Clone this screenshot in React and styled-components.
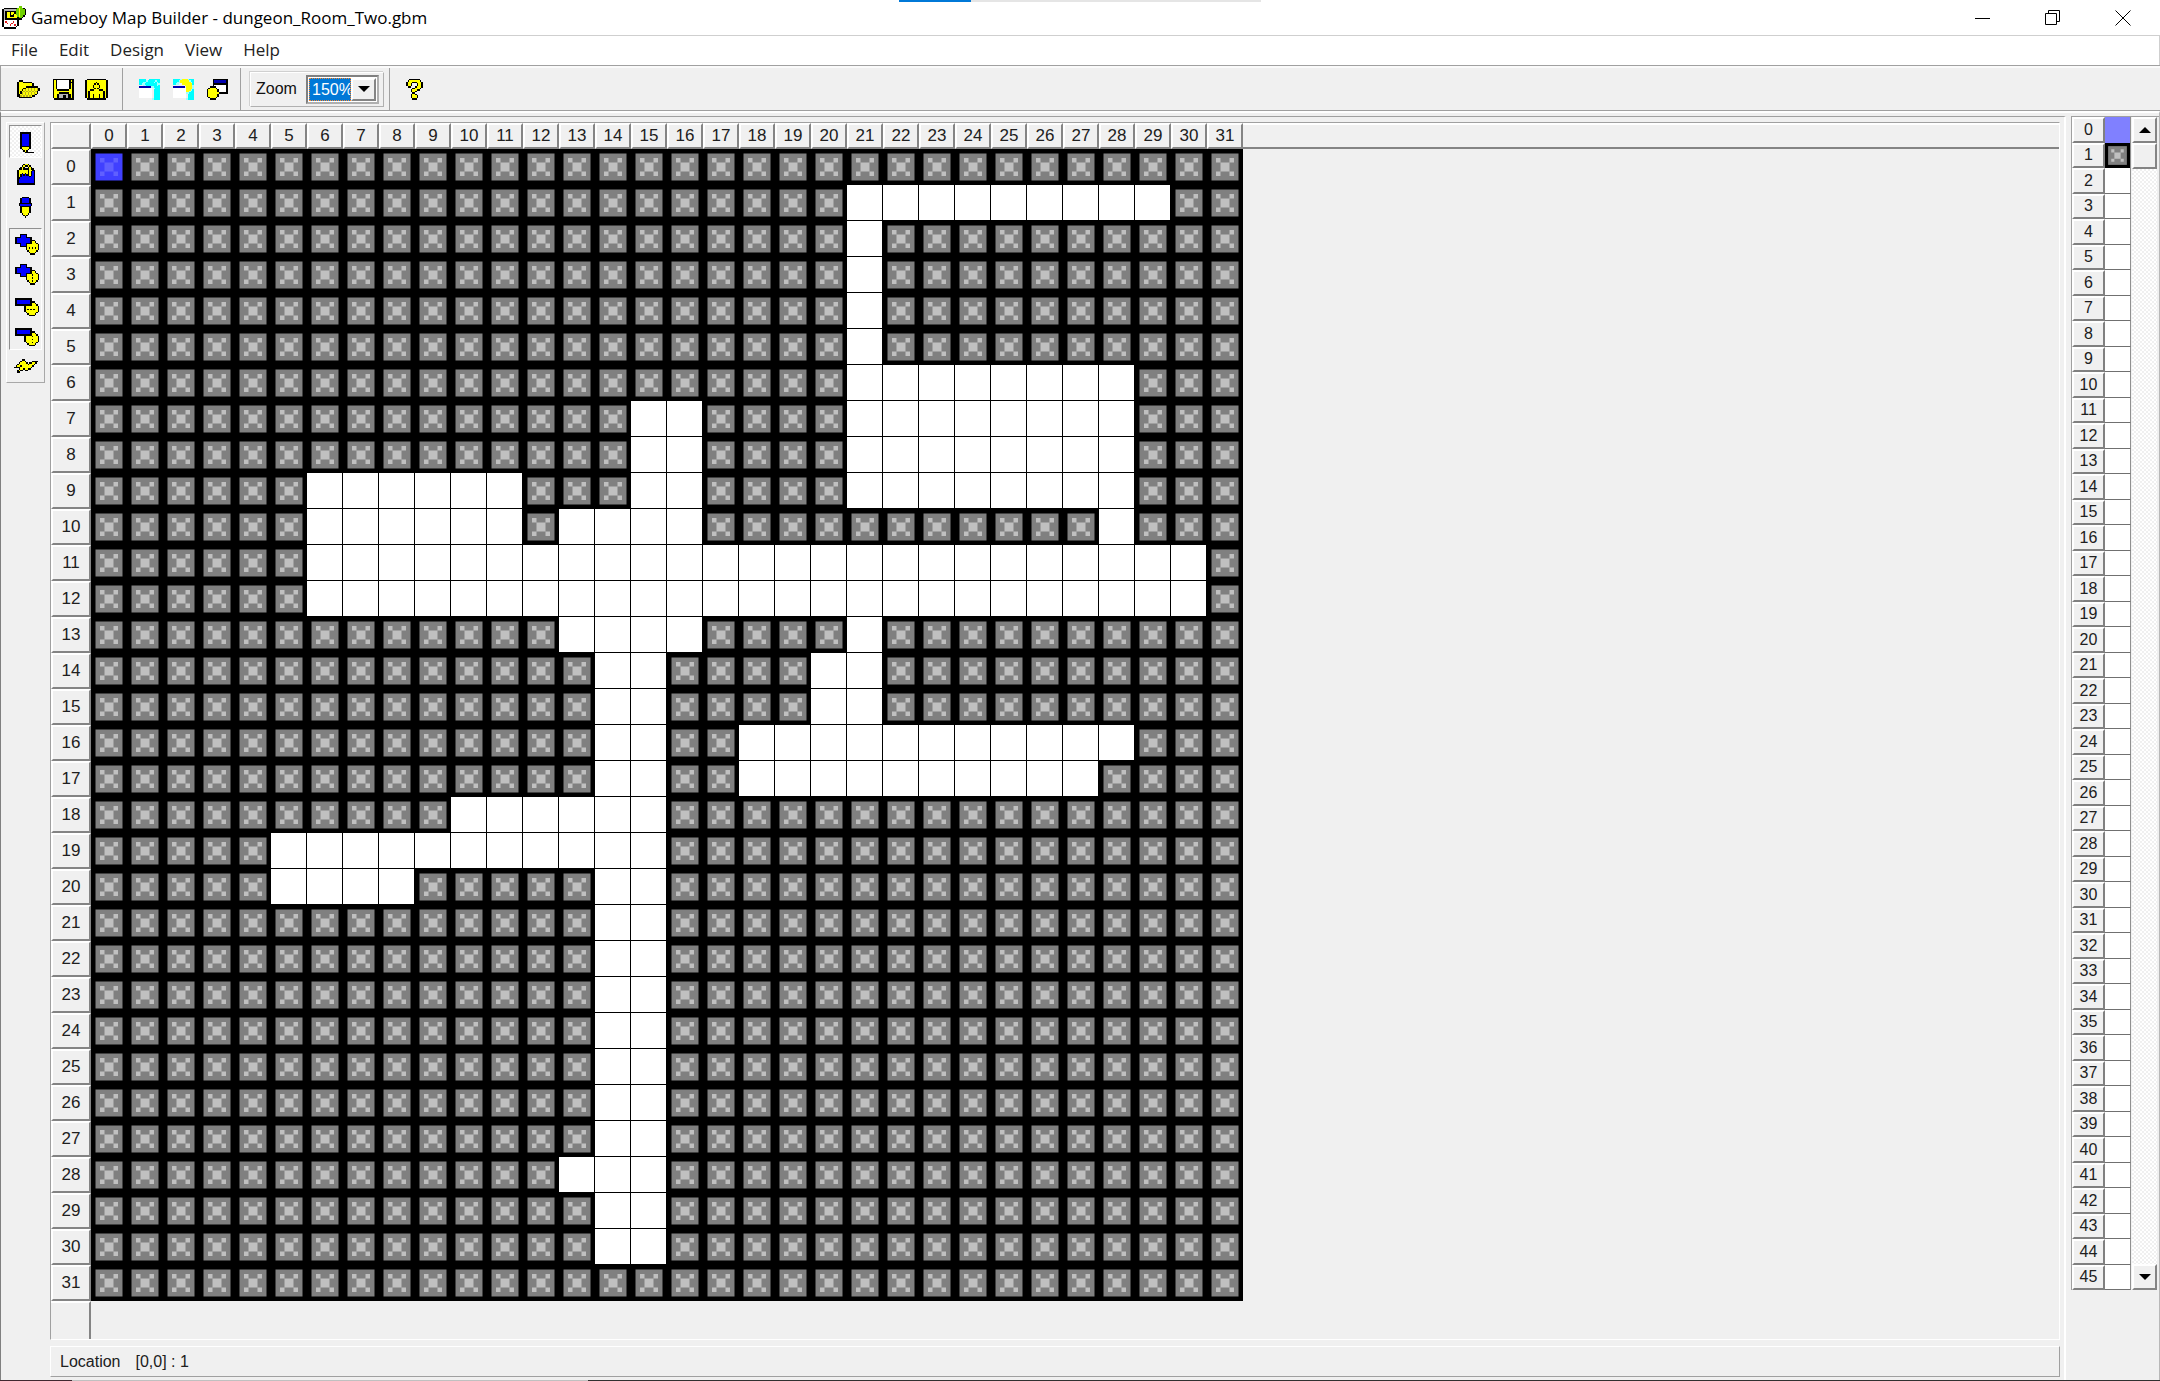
import React, { useState } from 'react';
import styled, { createGlobalStyle, css } from 'styled-components';

const GlobalStyle = createGlobalStyle`
  * { box-sizing: border-box; }
  body { margin: 0; background: #f0f0f0; color: #111; font: 16px "Liberation Sans", Arial, sans-serif; }
  button { font: inherit; color: inherit; margin: 0; padding: 0; border: 0; background: none; }
`;

const COLORS = {
  K: '#000000', Y: '#ffff00', D: '#b8b020', W: '#ffffff', G: '#b4b4b4',
  B: '#0000ff', N: '#0000b0', C: '#00ffff', L: '#a0ffff', R: '#e02020', E: '#70d000',
};

const ART = {
  app: [
    '...........EE...',
    '.KKKKKKKKKEYEEK.',
    'KGGGGGGGGEEYEEEK',
    'KGKKKKKKKEEYEEEK',
    'KGKYYKYYKEEYEEEK',
    'KGKYYKYKYEEYEEEK',
    'KGKYYKKKYYEYEEK.',
    'KGKYYYYYYYKEEK..',
    'KGKKKKKKKKKKK...',
    'KWWWWWWWWWK.....',
    'KWRWWWWRWWK.....',
    'KWWRWWRWWWK.....',
    'KWWWWRWWRWK.....',
    'KWWWWWWWWK......',
    '.KKKKKKKK.......',
  ],
  open: [
    '.KKK...........',
    'KYYYKKKKKK.....',
    'KYYYYYYYYYK....',
    'KYYYYYYYYYK....',
    'KYYYYYKKKKKKKK.',
    'KYYYKKYDYDYDYDK',
    'KYYKYDYDYDYDYDK',
    'KYKYDYDYDYDYDK.',
    'KYKDYDYDYDYDYK.',
    'KKYDYDYDYDYDK..',
    'KKDYDYDYDYKK...',
    '.KKKKKKKKK.....',
  ],
  save: [
    'KKKKKKKKKKKKKK',
    'KYKWWWWWWWWKYK',
    'KYKWWWWWWWWKKK',
    'KYKWWWWWWWWKYK',
    'KYKWWWWWWWWKYK',
    'KYKWWWWWWWWKYK',
    'KYKWWWWWWWWKYK',
    'KYYKKKKKKKKYYK',
    'KYYYYYYYYYYYYK',
    'KYYYKKKKKKKYYK',
    'KYYKGGGGGGKKYK',
    'KYYKGGGKKGKKYK',
    'KYYKGGGKKGKKYK',
    '.KKKKKKKKKKKKK',
  ],
  exportMap: [
    '.KKKKKKKKKKKKK.',
    'KYYYYYYYYYYYYYK',
    'KYYYYYYKYYYYYYK',
    'KYYYYYKYKYYYYYK',
    'KYYYYKYYYKYYYYK',
    'KYYYYKYYYKYYYYK',
    'KYYYYYKYKYYYYYK',
    'KYYKKKYYYKKKYYK',
    'KYKYYYYYYYYYKYK',
    'KYKYYYYYYYYYKYK',
    'KYKYYKYYYKYYKYK',
    'KYKYYKYYYKYYKYK',
    'KYKYYKYYYKYYKYK',
    '.KKKKKKKKKKKKK.',
  ],
  mapProps: [
    'CCCCC..CCCCCCC',
    'CCCCCLCCCCCLCC',
    'CCCLLCCCCCLCLC',
    'CCLLCCCCCCCCLL',
    '...LLCCCCCCCLC',
    'NNNNNNNNLLCCCC',
    'WWWWWWWWW.LCCC',
    'WWWWWWWWW.CCCC',
    'WWWWWWWWW.CCCC',
    'WWWWWWWWW.CCCC',
    'WWWWWWWWW.CCCC',
    'WWWWWWWWW.CCCC',
    'WWWWWWWWW.CCCC',
    '.........LCCCC',
  ],
  tileProps: [
    'CCCCCLYYYYLCCC',
    'CCCCLYYYYYYLCC',
    'CCCLLYYYYYYYLC',
    'CCLL..YYYYYYYC',
    '........YYYYYL',
    'NNNNNNNN.YYYYL',
    'WWWWWWWWWYYYYL',
    'WWWWWWWWWYYYLC',
    'WWWWWWWWWYYLCC',
    'WWWWWWWWWLLCCC',
    'WWWWWWWWW.CCCC',
    'WWWWWWWWW.CCCC',
    'WWWWWWWWW.CCCC',
    '.........LCCCC',
  ],
  defaults: [
    '....KKKKKKKKKK',
    '....KNNNNNNNNK',
    '....KNNNNNNNNK',
    '....KKKKKKKKKK',
    '....KWWWWWWWWK',
    '..KKKKWWWWWWWK',
    '.KYYYYKWWWWWWK',
    'KYYYYYYKWWWWWK',
    'KYYYYYYKWWWWWK',
    'KYYYYYYYKKKKKK',
    'KYYYYYYK......',
    'KYYYYYYK......',
    '.KYYYYK.......',
    '..KKKK........',
  ],
  help: [
    '..KKKKKKK..',
    '.KYYYYYYYK.',
    'KYYYKKKYYYK',
    'KYYK...KYYK',
    'KYYK...KYYK',
    '.KK...KYYYK',
    '....KKYYYK.',
    '...KYYYKK..',
    '...KYYK....',
    '....KK.....',
    '...KYYK....',
    '...KYYYK...',
    '...KYYYK...',
    '....KKK....',
  ],
  pencil: [
    '..........',
    '..........',
    '.KKKKKKK..',
    '.KBBBBBK..',
    '.KBBBBBK..',
    '.KBBBBBK..',
    '.KBBBBBK..',
    '.KBBBBBK..',
    '.KBBBBBK..',
    '.KBBBBBK..',
    '.KBBBBBK..',
    '.KKKKKKK..',
    '.KYYYYYK..',
    '..KYYYK...',
    '...KYK....',
    '....KKKKKK',
  ],
  fill: [
    '....KYYK....',
    '...KYKKYK...',
    '..KYK..KYK..',
    '.KKYKKKKYKK.',
    'KYYYYYYKYYKK',
    'KYYYYYYKYKBK',
    'KYYKYKYKYKBK',
    'KYKBKBKKYKBK',
    'KYKBBBBBKBBK',
    'KKBBBBBBBBBK',
    'KBBBBBBBBBBK',
    'KBBBBBBBBBBK',
    'KBBBBBBBBBBK',
    'KKKKKKKKKKKK',
  ],
  dropper: [
    '..KKKKK..',
    '.KBBBBBK.',
    '.KBBBBBK.',
    '.KBBBBBK.',
    'KKKKKKKKK',
    'KBBBBBBBK',
    '.KKKKKKK.',
    '.KYYYYYK.',
    '.KYYYYYK.',
    '.KYYYYYK.',
    '.KYYYYYK.',
    '..KYYYK..',
    '...KYK...',
    '....K....',
  ],
  addRow: [
    '...KKKKK........',
    '...KBBBK........',
    'KKKKBBBKKKK.....',
    'KBBBBBBBBBK.....',
    'KBBBBBBBBBKKK...',
    'KBBBBBBBBBKYYK..',
    'KKKKBBBKKKKYYYK.',
    '...KBBBKYYYYYYYK',
    '...KKKKKYYYYYYYK',
    '.......KYKYKYKYK',
    '.......KYYYYYYYK',
    '........KYYYYYK.',
    '.........KYYYK..',
    '..........KKK...',
  ],
  addCol: [
    '...KKKKK........',
    '...KBBBK........',
    'KKKKBBBKKKK.....',
    'KBBBBBBBBBK.....',
    'KBBBBBBBBBKKK...',
    'KBBBBBBBBBKYYK..',
    'KKKKBBBKKKKYYYK.',
    '...KBBBKYYYKYYYK',
    '...KKKKKYYYYYYYK',
    '.......KYYYKYYYK',
    '.......KYYYYYYYK',
    '........KYYKYYK.',
    '.........KYYYK..',
    '..........KKK...',
  ],
  delRow: [
    '................',
    '................',
    '................',
    '................',
    'KKKKKKKKKKK.....',
    'KBBBBBBBBBK.....',
    'KBBBBBBBBBKKK...',
    'KBBBBBBBBBKYYK..',
    'KKKKKKKKKKKYYYK.',
    '......KYYYYYYYYK',
    '......KYYYYYYYYK',
    '......KYKYKYKYYK',
    '......KYYYYYYYYK',
    '.......KYYYYYYK.',
    '........KYYYYK..',
    '.........KKKK...',
  ],
  delCol: [
    '................',
    '................',
    '................',
    '................',
    'KKKKKKKKKKK.....',
    'KBBBBBBBBBK.....',
    'KBBBBBBBBBKKK...',
    'KBBBBBBBBBKYYK..',
    'KKKKKKKKKKKYYYK.',
    '......KYYYYKYYYK',
    '......KYYYYYYYYK',
    '......KYYYYKYYYK',
    '......KYYYYYYYYK',
    '.......KYYYKYYK.',
    '........KYYYYK..',
    '.........KKKK...',
  ],
  flash: [
    '................',
    '................',
    '.....KK.........',
    '....KYYK....KKKK',
    '...KYYYYK.KKYYK.',
    '..KYYYYYYKYYYK..',
    '.KYYKYYYYYYYK...',
    'KKKKYYYYYYYK....',
    '...KYYKYYKK.....',
    '..KYKK.KK.......',
    '..KK............',
  ],
};

const IconSvg = styled.svg`
  display: block;
  width: 24px;
  height: 24px;
  flex: none;
`;

function PixelIcon({ name }) {
  const rows = ART[name];
  const dx = Math.floor((16 - rows[0].length) / 2);
  const dy = Math.floor((16 - rows.length) / 2);
  const rects = [];
  rows.forEach((row, y) => {
    let x = 0;
    while (x < row.length) {
      let end = x + 1;
      while (end < row.length && row[end] === row[x]) end += 1;
      if (row[x] !== '.') {
        rects.push(<rect key={`${x}-${y}`} x={x + dx} y={y + dy} width={end - x} height="1" fill={COLORS[row[x]]} />);
      }
      x = end;
    }
  });
  return <IconSvg viewBox="0 0 16 16" shapeRendering="crispEdges" aria-hidden="true">{rects}</IconSvg>;
}

const raised = css`
  border: 2px solid;
  border-color: #fff #848484 #848484 #fff;
  background: #f0f0f0;
`;

const Window = styled.div`
  display: flex;
  flex-direction: column;
  min-height: 100vh;
`;

const LoadTrack = styled.div`
  position: absolute;
  top: 0;
  left: 899px;
  width: 362px;
  height: 2px;
  background: linear-gradient(to right, #0078d7 72px, #e5e5e5 72px);
`;

const TitleBar = styled.header`
  display: flex;
  align-items: center;
  height: 36px;
  padding: 0 2px;
  background: #fff;
  border-bottom: 1px solid #cfcfcf;
`;

const Title = styled.h1`
  flex: 1;
  margin: 0 0 0 5px;
  font: 400 17px "Open Sans", "Noto Sans", sans-serif;
  color: #000;
`;

const CaptionButton = styled.button`
  display: grid;
  place-items: center;
  width: 70px;
  height: 35px;
  svg { width: 16px; height: 16px; fill: none; stroke: #000; }
`;

const MenuBar = styled.nav`
  display: flex;
  gap: 21px;
  height: 29px;
  padding: 0 0 2px 11px;
  background: #fff;
  border-right: 1px solid #cfcfcf;
`;

const MenuButton = styled.button`
  font: 17px "Open Sans", "Noto Sans", sans-serif;
  color: #222;
`;

const Toolbar = styled.div`
  display: flex;
  align-items: flex-end;
  height: 46px;
  border-top: 1px solid #a0a0a0;
  border-bottom: 1px solid #a0a0a0;
  border-left: 1px solid #a0a0a0;
  box-shadow: inset 0 2px #fafafa;
`;

const ToolGroup = styled.div`
  display: flex;
  align-items: center;
  gap: 10px;
  height: 42px;
  padding: 0 ${(p) => p.$padRight}px 0 ${(p) => p.$padLeft}px;
  border-right: ${(p) => (p.$last ? '0' : '1px solid #a0a0a0')};
`;

const ToolbarButton = styled.button`
  display: block;
  width: 24px;
  height: 24px;
`;

const ZoomBox = styled.div`
  display: flex;
  align-items: center;
  justify-content: space-between;
  width: 134px;
  height: 35px;
  padding: 0 4px 0 5px;
  border: 1px solid #b0b0b0;
  border-top-color: #fff;
  border-left-color: #fff;
  box-shadow: -1px -1px #d0d0d0;
`;

const Combo = styled.div`
  display: flex;
  width: 73px;
  height: 29px;
  padding: 1px;
  background: #fff;
  border: 2px solid;
  border-color: #808080 #b0b0b0 #b0b0b0 #808080;
`;

const ZoomSelect = styled.select`
  flex: 1;
  min-width: 0;
  padding: 0 0 0 2px;
  appearance: none;
  border: 1px dotted #ff8728;
  border-radius: 0;
  background: #0078d7;
  color: #fff;
  font: 16px "Liberation Sans", Arial, sans-serif;
`;

const ArrowButton = styled.button`
  display: grid;
  place-items: center;
  width: 25px;
  height: ${(p) => p.$height || 23}px;
  flex: none;
  ${raised}
`;

const Triangle = styled.span`
  width: 0;
  height: 0;
  border: 6px solid transparent;
  border-width: ${(p) => (p.$up ? '0 6px 6px' : '6px 6px 0')};
  border-top-color: ${(p) => (p.$up ? 'transparent' : '#000')};
  border-bottom-color: ${(p) => (p.$up ? '#000' : 'transparent')};
`;

const Workspace = styled.main`
  display: flex;
  flex: 1;
  padding-top: 3px;
  border-top: 2px solid #fff;
  border-left: 1px solid #808080;
  border-right: 1px solid #b8b8b8;
`;

const Editor = styled.section`
  display: flex;
  flex: 1;
  min-width: 0;
  margin-right: 5px;
  padding: 5px 4px 3px 5px;
  border-top: 1px solid #a0a0a0;
  border-right: 2px solid #fff;
`;

const ToolPalette = styled.div`
  display: flex;
  flex-direction: column;
  align-self: flex-start;
  flex: none;
  width: 39px;
  height: 261px;
  margin-right: 5px;
  padding: 2px;
  border: 1px solid #a8a8a8;
  border-top-color: #fff;
  border-left-color: #fff;
`;

const PaletteButton = styled.button`
  display: grid;
  place-items: center;
  width: 33px;
  height: ${(p) => p.$height || 33}px;
  ${(p) => p.$pressed && css`
    border: 1px solid;
    border-color: #909090 #fff #fff #909090;
    background: repeating-conic-gradient(#fff 0 25%, #f0f0f0 0 50%) 0 0 / 4px 4px;
  `}
`;

const PressedGroup = styled.div`
  width: 33px;
  margin-top: 5px;
  border: 1px solid;
  border-color: #909090 #fff #fff #909090;
`;

const EditorColumn = styled.div`
  display: flex;
  flex-direction: column;
  flex: 1;
  min-width: 0;
`;

const MapPanel = styled.div`
  display: grid;
  flex: 1;
  grid-template-columns: 40px max-content 1fr;
  grid-template-rows: 26px max-content minmax(20px, 1fr);
  border: 1px solid;
  border-color: #a0a0a0 #fff #fff #a0a0a0;
`;

const HeaderCell = styled.div`
  display: flex;
  align-items: center;
  justify-content: center;
  font-size: 17px;
  line-height: 20px;
  color: #202020;
  ${raised}
`;

const ColumnHeaders = styled.div`
  display: grid;
  grid-template-columns: repeat(32, 36px);
`;

const RowHeaders = styled.div`
  display: grid;
  grid-template-rows: repeat(32, 36px);
`;

const HeaderFiller = styled.div`
  border-top: 2px solid #fff;
  border-bottom: 2px solid #848484;
`;

const RowFiller = styled.div`
  border-top: 2px solid #fff;
  border-right: 2px solid #848484;
`;

const MapGrid = styled.div`
  display: grid;
  grid-template-columns: repeat(32, 36px);
  grid-auto-rows: 36px;
`;

const FloorCell = styled.div`
  background: #fff;
  border-right: 1px solid #000;
  border-bottom: 1px solid #000;
`;

const TileSvg = styled.svg`
  display: block;
  width: ${(p) => p.$size}px;
  height: ${(p) => p.$size}px;
`;

function Tile({ size, selected }) {
  const base = selected ? '#4040ff' : '#808080';
  const light = selected ? '#6060ff' : '#c0c0c0';
  return (
    <TileSvg $size={size} viewBox="0 0 8 8" aria-hidden="true">
      <path fill="#000" d="M0 0h8v8H0z" />
      <path fill={base} d="M1 1h6v6H1z" />
      <path fill={light} d="M2 2h1v1H2zM5 2h1v1H5zM3 3h2v2H3zM2 5h1v1H2zM5 5h1v1H5z" />
    </TileSvg>
  );
}

const StatusBar = styled.footer`
  display: flex;
  align-items: center;
  gap: 15px;
  height: 31px;
  margin-top: 6px;
  padding-left: 9px;
  border: 1px solid;
  border-color: #fff #a0a0a0 #a0a0a0 #fff;
  color: #202020;
`;

const TilePanel = styled.aside`
  display: flex;
  align-self: flex-start;
  flex: none;
  width: 88px;
  height: 1174px;
  border-top: 1px solid #a0a0a0;
  border-left: 1px solid #a0a0a0;
`;

const TileList = styled.div`
  display: grid;
  grid-template-rows: repeat(46, 1fr);
  width: 59px;
`;

const TileRow = styled.button`
  display: grid;
  grid-template-columns: 33px 1fr;
  min-height: 0;
`;

const TileNumber = styled.span`
  display: flex;
  align-items: center;
  justify-content: center;
  height: 100%;
  min-height: 0;
  font-size: 16px;
  line-height: 18px;
  color: #202020;
  border: 2px solid;
  border-color: #fff #808080 #808080 #fff;
`;

const TileSwatch = styled.span`
  height: 100%;
  min-height: 0;
  overflow: hidden;
  background: ${(p) => p.$color};
  border-bottom: ${(p) => (p.$plain ? '1px solid #707070' : '0')};
  border-right: 1px solid #909090;
`;

const ScrollTrack = styled.div`
  display: flex;
  flex-direction: column;
  justify-content: space-between;
  width: 25px;
  margin-left: 1px;
  background: repeating-conic-gradient(#fff 0 25%, #f0f0f0 0 50%) 0 0 / 4px 4px;
`;

const ScrollThumb = styled.div`
  height: 26px;
  ${raised}
`;

const BottomEdge = styled.div`
  height: 1px;
  background: linear-gradient(to right, #402830 72px, #c0c0c0 72px, #c0c0c0 588px, #303030 588px);
`;

const FLOOR = {
  1: [[21, 29]], 2: [[21, 21]], 3: [[21, 21]], 4: [[21, 21]], 5: [[21, 21]],
  6: [[21, 28]],
  7: [[15, 16], [21, 28]],
  8: [[15, 16], [21, 28]],
  9: [[6, 11], [15, 16], [21, 28]],
  10: [[6, 11], [13, 16], [28, 28]],
  11: [[6, 30]],
  12: [[6, 30]],
  13: [[13, 16], [21, 21]],
  14: [[14, 15], [20, 21]],
  15: [[14, 15], [20, 21]],
  16: [[14, 15], [18, 28]],
  17: [[14, 15], [18, 27]],
  18: [[10, 15]],
  19: [[5, 15]],
  20: [[5, 8], [14, 15]],
  28: [[13, 15]],
  31: [],
};

const isFloor = (row, col) => {
  const spans = FLOOR[row] || (row > 20 ? [[14, 15]] : []);
  return spans.some(([from, to]) => col >= from && col <= to);
};

const range = (count) => Array.from({ length: count }, (_, i) => i);

export default function App() {
  const [zoom, setZoom] = useState('150%');

  return (
    <>
      <GlobalStyle />
      <Window>
        <LoadTrack />
        <TitleBar>
          <PixelIcon name="app" />
          <Title>Gameboy Map Builder - dungeon_Room_Two.gbm</Title>
          <CaptionButton aria-label="Minimize">
            <svg viewBox="0 0 16 16"><path d="M0 8.5h15" /></svg>
          </CaptionButton>
          <CaptionButton aria-label="Restore">
            <svg viewBox="0 0 16 16"><path d="M.5 3.5h11v11H.5zM3.5 3.5v-3h11v11h-3" /></svg>
          </CaptionButton>
          <CaptionButton aria-label="Close">
            <svg viewBox="0 0 16 16"><path d="M.5.5l15 15M15.5.5l-15 15" /></svg>
          </CaptionButton>
        </TitleBar>
        <MenuBar>
          {['File', 'Edit', 'Design', 'View', 'Help'].map((label) => (
            <MenuButton key={label}>{label}</MenuButton>
          ))}
        </MenuBar>
        <Toolbar>
          <ToolGroup $padLeft={16} $padRight={13}>
            <ToolbarButton aria-label="Open"><PixelIcon name="open" /></ToolbarButton>
            <ToolbarButton aria-label="Save"><PixelIcon name="save" /></ToolbarButton>
            <ToolbarButton aria-label="Export"><PixelIcon name="exportMap" /></ToolbarButton>
          </ToolGroup>
          <ToolGroup $padLeft={14} $padRight={11}>
            <ToolbarButton aria-label="Map properties"><PixelIcon name="mapProps" /></ToolbarButton>
            <ToolbarButton aria-label="Location properties"><PixelIcon name="tileProps" /></ToolbarButton>
            <ToolbarButton aria-label="Default location properties"><PixelIcon name="defaults" /></ToolbarButton>
          </ToolGroup>
          <ToolGroup $padLeft={9} $padRight={5}>
            <ZoomBox>
              <label htmlFor="zoom">Zoom</label>
              <Combo>
                <ZoomSelect id="zoom" value={zoom} onChange={(e) => setZoom(e.target.value)}>
                  <option>50%</option>
                  <option>100%</option>
                  <option>150%</option>
                  <option>200%</option>
                </ZoomSelect>
                <ArrowButton aria-label="Show zoom levels"><Triangle /></ArrowButton>
              </Combo>
            </ZoomBox>
          </ToolGroup>
          <ToolGroup $padLeft={13} $padRight={11} $last>
            <ToolbarButton aria-label="Help topics"><PixelIcon name="help" /></ToolbarButton>
          </ToolGroup>
        </Toolbar>
        <Workspace>
          <Editor>
            <ToolPalette>
              <PaletteButton $pressed aria-label="Pencil"><PixelIcon name="pencil" /></PaletteButton>
              <PaletteButton aria-label="Flood fill"><PixelIcon name="fill" /></PaletteButton>
              <PaletteButton aria-label="Dropper"><PixelIcon name="dropper" /></PaletteButton>
              <PressedGroup>
                <PaletteButton $height={30} aria-label="Insert row"><PixelIcon name="addRow" /></PaletteButton>
                <PaletteButton $height={30} aria-label="Insert column"><PixelIcon name="addCol" /></PaletteButton>
                <PaletteButton $height={30} aria-label="Delete row"><PixelIcon name="delRow" /></PaletteButton>
                <PaletteButton $height={30} aria-label="Delete column"><PixelIcon name="delCol" /></PaletteButton>
              </PressedGroup>
              <PaletteButton $height={30} aria-label="Block fill"><PixelIcon name="flash" /></PaletteButton>
            </ToolPalette>
            <EditorColumn>
              <MapPanel>
                <HeaderCell />
                <ColumnHeaders>
                  {range(32).map((n) => <HeaderCell key={n}>{n}</HeaderCell>)}
                </ColumnHeaders>
                <HeaderFiller />
                <RowHeaders>
                  {range(32).map((n) => <HeaderCell key={n}>{n}</HeaderCell>)}
                </RowHeaders>
                <MapGrid>
                  {range(1024).map((i) => {
                    const row = Math.floor(i / 32);
                    const col = i % 32;
                    return isFloor(row, col)
                      ? <FloorCell key={i} />
                      : <Tile key={i} size={36} selected={i === 0} />;
                  })}
                </MapGrid>
                <div />
                <RowFiller />
              </MapPanel>
              <StatusBar>
                <span>Location</span>
                <span>[0,0] : 1</span>
              </StatusBar>
            </EditorColumn>
          </Editor>
          <TilePanel>
            <TileList>
              {range(46).map((n) => (
                <TileRow key={n}>
                  <TileNumber>{n}</TileNumber>
                  <TileSwatch $color={n === 0 ? '#8080ff' : '#fff'} $plain={n > 1}>
                    {n === 1 && <Tile size={25} />}
                  </TileSwatch>
                </TileRow>
              ))}
            </TileList>
            <ScrollTrack>
              <div>
                <ArrowButton $height={26} aria-label="Scroll up"><Triangle $up /></ArrowButton>
                <ScrollThumb />
              </div>
              <ArrowButton $height={26} aria-label="Scroll down"><Triangle /></ArrowButton>
            </ScrollTrack>
          </TilePanel>
        </Workspace>
        <BottomEdge />
      </Window>
    </>
  );
}
